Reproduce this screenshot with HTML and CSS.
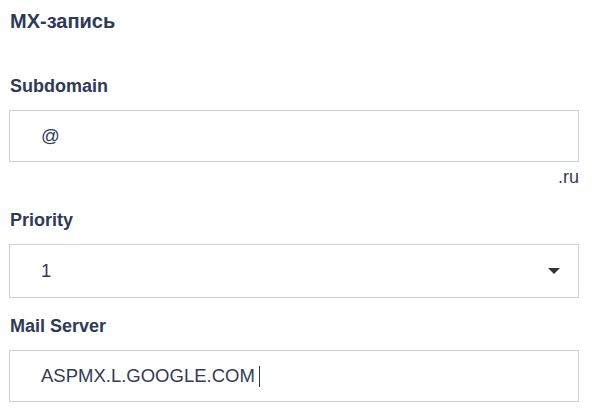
FILE: index.html
```html
<!DOCTYPE html>
<html lang="ru">
<head>
    <meta charset="UTF-8">
    <meta name="viewport" content="width=device-width, initial-scale=1.0">
    <link rel="stylesheet" href="styles.css">
    <title>MX-запись</title>
</head>
<body>
    <div class="record">
        <h2 class="recordTitle">MX-запись</h2>

        <div class="field">
            <label class="fieldLabel" for="subdomain">Subdomain</label>
            <div class="box" id="subdomain">@</div>
            <p class="hint">.ru</p>
        </div>

        <div class="field">
            <label class="fieldLabel" for="priority">Priority</label>
            <div class="box select" id="priority">
                <span>1</span>
                <span class="arrow"></span>
            </div>
        </div>

        <div class="field">
            <label class="fieldLabel" for="server">Mail Server</label>
            <div class="box" id="server">ASPMX.L.GOOGLE.COM<span class="caret"></span></div>
        </div>
    </div>
</body>
</html>
```

FILE: styles.css
```css
        body {
            margin: 0;
            background: #fff;
            font-family: "Liberation Sans", Arial, sans-serif;
            color: #2e3a59;
        }
        .record {
            width: 570px;
            padding: 9px 9px 0 9px;
        }
        .recordTitle {
            margin: 0 0 42px 1px;
            font-size: 20px;
            line-height: 24px;
            font-weight: 700;
        }
        .field {
            margin-bottom: 17px;
        }
        .fieldLabel {
            display: block;
            margin: 0 0 13px 1px;
            font-size: 18px;
            line-height: 22px;
            font-weight: 700;
        }
        .box {
            box-sizing: border-box;
            height: 52px;
            padding: 0 18px 0 31px;
            border: 1px solid #c9d3df;
            display: flex;
            align-items: center;
            font-size: 18.5px;
            color: #333c55;
        }
        .select {
            height: 54px;
            justify-content: space-between;
        }
        /*little dropdown triangle*/
        .arrow {
            width: 0;
            height: 0;
            border-left: 6px solid transparent;
            border-right: 6px solid transparent;
            border-top: 6px solid #333;
        }
        .caret {
            display: inline-block;
            width: 1px;
            height: 21px;
            margin-left: 4px;
            background: #2e3a59;
        }
        .hint {
            margin: 4px 0 21px 0;
            text-align: right;
            font-size: 18px;
            line-height: 22px;
            color: #333c55;
        }
```
